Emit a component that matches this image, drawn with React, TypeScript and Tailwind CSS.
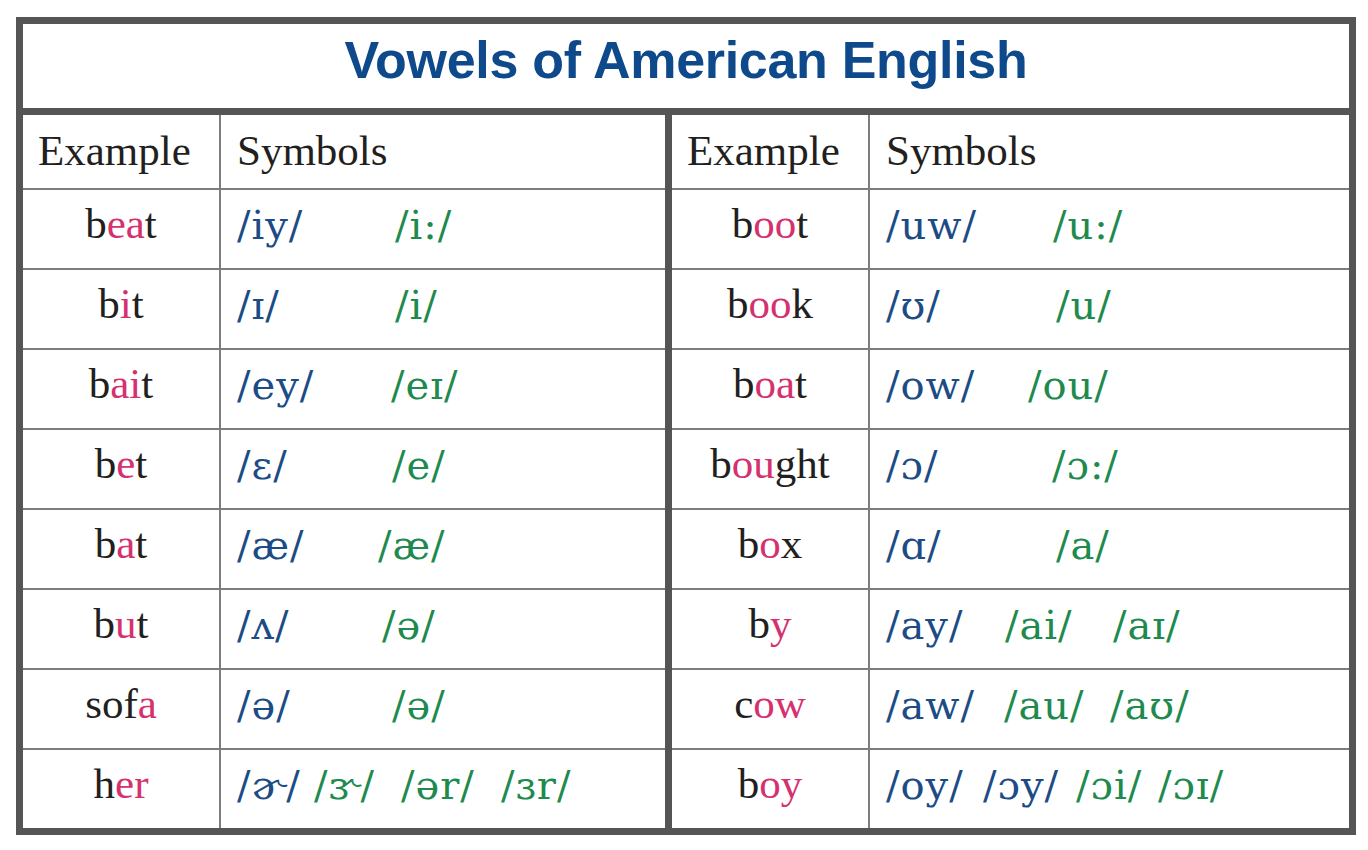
import React from "react";

type Sym = { t: string; c: "blue" | "green"; w?: string };
type Row = { word: [string, boolean][]; syms: Sym[] };

const serif = "font-['Liberation_Serif','DejaVu_Serif',serif]";

const left: Row[] = [
    { word: [["b", false], ["ea", true], ["t", false]], syms: [{ t: "/iy/", c: "blue", w: "w-[158px]" }, { t: "/i:/", c: "green" }] },
    { word: [["b", false], ["i", true], ["t", false]], syms: [{ t: "/ɪ/", c: "blue", w: "w-[158px]" }, { t: "/i/", c: "green" }] },
    { word: [["b", false], ["ai", true], ["t", false]], syms: [{ t: "/ey/", c: "blue", w: "w-[154px]" }, { t: "/eɪ/", c: "green" }] },
    { word: [["b", false], ["e", true], ["t", false]], syms: [{ t: "/ɛ/", c: "blue", w: "w-[155px]" }, { t: "/e/", c: "green" }] },
    { word: [["b", false], ["a", true], ["t", false]], syms: [{ t: "/æ/", c: "blue", w: "w-[141px]" }, { t: "/æ/", c: "green" }] },
    { word: [["b", false], ["u", true], ["t", false]], syms: [{ t: "/ʌ/", c: "blue", w: "w-[145px]" }, { t: "/ə/", c: "green" }] },
    { word: [["sof", false], ["a", true]], syms: [{ t: "/ə/", c: "blue", w: "w-[155px]" }, { t: "/ə/", c: "green" }] },
    {
        word: [["h", false], ["er", true]],
        syms: [
            { t: "/ɚ/", c: "blue", w: "w-[77px]" },
            { t: "/ɝ/", c: "green", w: "w-[87px]" },
            { t: "/ər/", c: "green", w: "w-[100px]" },
            { t: "/ɜr/", c: "green" },
        ],
    },
];

const right: Row[] = [
    { word: [["b", false], ["oo", true], ["t", false]], syms: [{ t: "/uw/", c: "blue", w: "w-[167px]" }, { t: "/u:/", c: "green" }] },
    { word: [["b", false], ["oo", true], ["k", false]], syms: [{ t: "/ʊ/", c: "blue", w: "w-[170px]" }, { t: "/u/", c: "green" }] },
    { word: [["b", false], ["oa", true], ["t", false]], syms: [{ t: "/ow/", c: "blue", w: "w-[142px]" }, { t: "/ou/", c: "green" }] },
    { word: [["b", false], ["ou", true], ["ght", false]], syms: [{ t: "/ɔ/", c: "blue", w: "w-[166px]" }, { t: "/ɔ:/", c: "green" }] },
    { word: [["b", false], ["o", true], ["x", false]], syms: [{ t: "/ɑ/", c: "blue", w: "w-[170px]" }, { t: "/a/", c: "green" }] },
    {
        word: [["b", false], ["y", true]],
        syms: [
            { t: "/ay/", c: "blue", w: "w-[119px]" },
            { t: "/ai/", c: "green", w: "w-[108px]" },
            { t: "/aɪ/", c: "green" },
        ],
    },
    {
        word: [["c", false], ["ow", true]],
        syms: [
            { t: "/aw/", c: "blue", w: "w-[118px]" },
            { t: "/au/", c: "green", w: "w-[106px]" },
            { t: "/aʊ/", c: "green" },
        ],
    },
    {
        word: [["b", false], ["oy", true]],
        syms: [
            { t: "/oy/", c: "blue", w: "w-[97px]" },
            { t: "/ɔy/", c: "blue", w: "w-[93px]" },
            { t: "/ɔi/", c: "green", w: "w-[82px]" },
            { t: "/ɔɪ/", c: "green" },
        ],
    },
];

const Half = ({ rows }: { rows: Row[] }) => (
    <div className="flex flex-col h-full">
        <div className="flex h-[75px] border-b-2 border-[#7d7d7d]">
            <div className="w-[198px] border-r-2 border-[#7d7d7d] flex items-center pl-[15px] text-[#231f20]">
                Example
            </div>
            <div className="flex-1 flex items-center pl-[16px] text-[#231f20]">Symbols</div>
        </div>
        {rows.map((r, i) => (
            <div
                key={i}
                className={
                    i < rows.length - 1
                        ? "flex h-[80px] border-b-2 border-[#7d7d7d]"
                        : "flex h-[78px]"
                }
            >
                <div className="w-[198px] border-r-2 border-[#7d7d7d] flex items-center justify-center pb-[9px] text-[#231f20]">
                    {r.word.map(([s, hi], j) => (
                        <span key={j} className={hi ? "text-[#d6316f]" : ""}>
                            {s}
                        </span>
                    ))}
                </div>
                <div className="flex-1 flex items-center pl-[16px] pb-[9px] font-['DejaVu_Serif','Liberation_Serif',serif] text-[40px] tracking-[1px]">
                    {r.syms.map((s, j) => (
                        <span
                            key={j}
                            className={`${s.w ?? ""} shrink-0 whitespace-nowrap ${
                                s.c === "blue" ? "text-[#1c4c86]" : "text-[#208a4e]"
                            }`}
                        >
                            {s.t}
                        </span>
                    ))}
                </div>
            </div>
        ))}
    </div>
);

export default function App() {
    return (
        <div className="w-[1368px] h-[850px] bg-white pt-[17px] pl-[16px]">
            <div className={`w-[1340px] h-[818px] border-[7px] border-[#555555] flex flex-col ${serif} text-[43px]`}>
                <div className="h-[91px] border-b-[7px] border-[#555555] flex items-center justify-center pb-[12px]">
                    <h1 className="font-['Liberation_Sans',Arial,sans-serif] font-bold text-[52px] tracking-[-0.3px] text-[#0e4a8b]">
                        Vowels of American English
                    </h1>
                </div>
                <div className="flex flex-1">
                    <div className="w-[649px] border-r-[7px] border-[#555555]">
                        <Half rows={left} />
                    </div>
                    <div className="flex-1">
                        <Half rows={right} />
                    </div>
                </div>
            </div>
        </div>
    );
}
